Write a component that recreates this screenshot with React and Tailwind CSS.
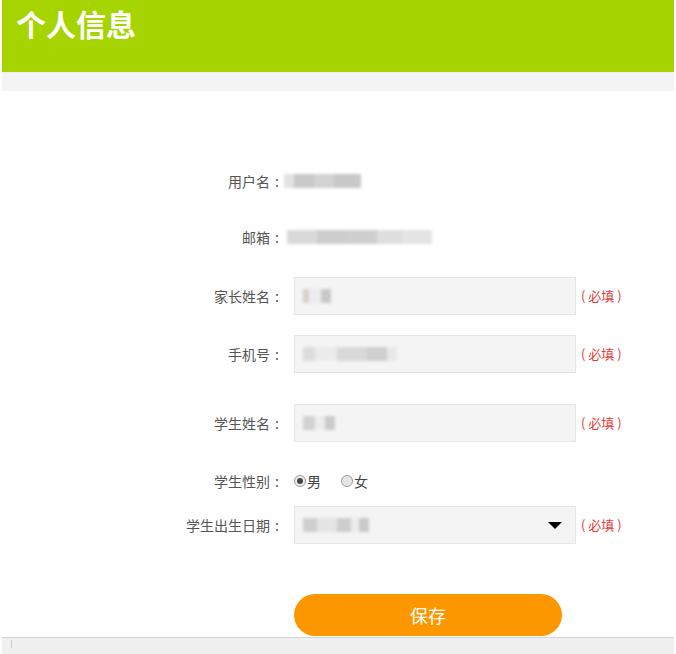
import React, { useState } from "react";

const font = { fontFamily: '"Noto Sans CJK SC", "Noto Sans", sans-serif' };

// blurred placeholder for masked values
function Masked({ blocks }) {
  return (
    <span className="flex items-center h-[14px] blur-[1.5px]">
      {blocks.map((b, i) => (
        <span
          key={i}
          className="inline-block h-full"
          style={{ width: b[0], background: b[1] }}
        />
      ))}
    </span>
  );
}

function Label({ children }) {
  return (
    <div className="w-[292px] shrink-0 flex justify-end pr-[10px] text-[14px] text-[#555]">
      <span>{children}</span>
      <span className="w-[14px] text-center">:</span>
    </div>
  );
}

function Required() {
  return <span className="ml-[5px] text-[13px] text-[#e53935]">( 必填 )</span>;
}

function Field({ blocks }) {
  return (
    <div className="w-[282px] h-[38px] bg-[#f4f4f4] border border-[#e6e6e6] flex items-center pl-[8px]">
      <Masked blocks={blocks} />
    </div>
  );
}

export default function App() {
  const [gender, setGender] = useState("m");

  return (
    <div className="w-[676px] h-[654px] bg-white px-[2px] flex flex-col" style={font}>
      {/* header */}
      <div className="h-[72px] bg-[#a6d400] shrink-0">
        <h1 className="pl-[14px] pt-[3px] text-[30px] font-bold text-white leading-[40px]">
          个人信息
        </h1>
      </div>
      <div className="h-[19px] bg-[#f4f4f5] border-t border-[#eeeef4] shrink-0" />

      {/* form */}
      <div className="flex-1 flex flex-col">
        <div className="flex items-center h-[38px] mt-[71px]">
          <Label>用户名</Label>
          <div className="-ml-[10px]">
            <Masked blocks={[[10, "#e2e2e2"], [20, "#c9c9c9"], [20, "#d2d2d2"], [27, "#c8c8c8"]]} />
          </div>
        </div>

        <div className="flex items-center h-[38px] mt-[18px]">
          <Label>邮箱</Label>
          <div className="-ml-[7px]">
            <Masked blocks={[[30, "#d9d9d9"], [30, "#cdcdcd"], [30, "#cfcfcf"], [25, "#dedede"], [30, "#e4e4e4"]]} />
          </div>
        </div>

        <div className="flex items-center h-[38px] mt-[21px]">
          <Label>家长姓名</Label>
          <Field blocks={[[6, "#d8d0c8"], [12, "#ececec"], [10, "#c9c9c9"]]} />
          <Required />
        </div>

        <div className="flex items-center h-[38px] mt-[20px]">
          <Label>手机号</Label>
          <Field blocks={[[12, "#dcdcdc"], [22, "#ebebeb"], [30, "#d8d8d8"], [20, "#cfcfcf"], [10, "#e8e8e8"]]} />
          <Required />
        </div>

        <div className="flex items-center h-[38px] mt-[31px]">
          <Label>学生姓名</Label>
          <Field blocks={[[12, "#d2d2d2"], [10, "#ececec"], [10, "#cbcbcb"]]} />
          <Required />
        </div>

        <div className="flex items-center h-[38px] mt-[20px]">
          <Label>学生性别</Label>
          <label className="flex items-center text-[14px] text-[#444]" onClick={() => setGender("m")}>
            <span className="w-[12px] h-[12px] rounded-full border border-[#9a9a9a] bg-[#ededed] flex items-center justify-center mr-[1px]">
              {gender === "m" && <span className="w-[6px] h-[6px] rounded-full bg-[#444]" />}
            </span>
            男
          </label>
          <label className="flex items-center text-[14px] text-[#444] ml-[20px]" onClick={() => setGender("f")}>
            <span className="w-[12px] h-[12px] rounded-full border border-[#9a9a9a] bg-[#e6e6e6] flex items-center justify-center mr-[1px]">
              {gender === "f" && <span className="w-[6px] h-[6px] rounded-full bg-[#444]" />}
            </span>
            女
          </label>
        </div>

        <div className="flex items-center h-[38px] mt-[6px]">
          <Label>学生出生日期</Label>
          <div className="w-[282px] h-[38px] bg-[#f4f4f4] border border-[#e6e6e6] flex items-center pl-[8px] pr-[13px] justify-between">
            <Masked blocks={[[14, "#cfcfcf"], [20, "#e4e4e4"], [14, "#cdcdcd"], [8, "#ececec"], [10, "#c9c9c9"]]} />
            <span className="w-0 h-0 border-l-[7px] border-r-[7px] border-t-[7px] border-l-transparent border-r-transparent border-t-black" />
          </div>
          <Required />
        </div>

        <div className="flex mt-[50px] pl-[292px]">
          <button className="w-[268px] h-[42px] rounded-[21px] bg-[#fc9700] text-white text-[18px]">
            保存
          </button>
        </div>
      </div>

      {/* bottom bar */}
      <div className="h-[17px] bg-[#f0f0f0] border-t border-[#d4d4d4] shrink-0 flex items-start pl-[9px]">
        <span className="w-[1px] h-[8px] bg-[#c8c8c8] mt-[2px]" />
      </div>
    </div>
  );
}
